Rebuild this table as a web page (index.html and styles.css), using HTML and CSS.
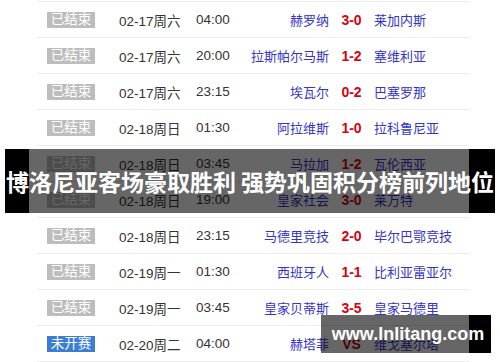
FILE: index.html
```html
<!DOCTYPE html>
<html lang="zh">
<head>
<meta charset="utf-8">
<link rel="stylesheet" href="styles.css">
</head>
<body>
<div class="page">
  <div class="list">
    <div class="row"><span class="badge done">已结束</span><span class="date">02-17周六</span><span class="time">04:00</span><span class="home">赫罗纳</span><span class="score">3-0</span><span class="away">莱加内斯</span></div>
    <div class="row"><span class="badge done">已结束</span><span class="date">02-17周六</span><span class="time">20:00</span><span class="home">拉斯帕尔马斯</span><span class="score">1-2</span><span class="away">塞维利亚</span></div>
    <div class="row"><span class="badge done">已结束</span><span class="date">02-17周六</span><span class="time">23:15</span><span class="home">埃瓦尔</span><span class="score">0-2</span><span class="away">巴塞罗那</span></div>
    <div class="row"><span class="badge done">已结束</span><span class="date">02-18周日</span><span class="time">01:30</span><span class="home">阿拉维斯</span><span class="score">1-0</span><span class="away">拉科鲁尼亚</span></div>
    <div class="row"><span class="badge done">已结束</span><span class="date">02-18周日</span><span class="time">03:45</span><span class="home">马拉加</span><span class="score">1-2</span><span class="away">瓦伦西亚</span></div>
    <div class="row"><span class="badge done">已结束</span><span class="date">02-18周日</span><span class="time">19:00</span><span class="home">皇家社会</span><span class="score">3-0</span><span class="away">莱万特</span></div>
    <div class="row"><span class="badge done">已结束</span><span class="date">02-18周日</span><span class="time">23:15</span><span class="home">马德里竞技</span><span class="score">2-0</span><span class="away">毕尔巴鄂竞技</span></div>
    <div class="row"><span class="badge done">已结束</span><span class="date">02-19周一</span><span class="time">01:30</span><span class="home">西班牙人</span><span class="score">1-1</span><span class="away">比利亚雷亚尔</span></div>
    <div class="row"><span class="badge done">已结束</span><span class="date">02-19周一</span><span class="time">03:45</span><span class="home">皇家贝蒂斯</span><span class="score">3-5</span><span class="away">皇家马德里</span></div>
    <div class="row"><span class="badge upcoming">未开赛</span><span class="date">02-20周二</span><span class="time">04:00</span><span class="home">赫塔菲</span><span class="score vs">VS</span><span class="away">维戈塞尔塔</span></div>
  </div>
  <div class="banner"><span>博洛尼亚客场豪取胜利 强势巩固积分榜前列地位</span></div>
  <div class="watermark"><span>www.lnlitang.com</span></div>
</div>
</body>
</html>
```
FILE: styles.css
```css
html, body {
  margin: 0;
  padding: 0;
  background: #fff;
}
.page {
  position: relative;
  width: 500px;
  height: 362px;
  overflow: hidden;
  font-family: "Liberation Sans", "Noto Sans CJK SC", sans-serif;
  font-size: 13px;
}
.list {
  margin: 1px 0 0 37px;
  width: 432px;
  border-top: 1px solid #ececec;
}
.row {
  display: grid;
  grid-template-columns: 72px 77px 54px 79px 45px 1fr;
  align-items: center;
  height: 35px;
  padding-left: 10px;
  border-bottom: 1px solid #ececec;
  white-space: nowrap;
}
.badge {
  width: 48px;
  height: 16px;
  line-height: 16px;
  text-align: center;
  color: #fff;
  font-size: 13.5px;
}
.done { background: #bdbdbd; }
.upcoming { background: #3b7dd2; }
.date, .time { color: #333; }
.date { font-size: 13.5px; }
.time { font-size: 13.5px; }
.home, .away { color: #3535c8; }
.home { text-align: right; }
.score {
  text-align: center;
  color: #d9000f;
  font-weight: bold;
  font-size: 14px;
}
.vs { color: #c00000; }
.banner {
  position: absolute;
  left: 5px;
  top: 149px;
  width: 490px;
  height: 64px;
  background: linear-gradient(to right, #000 0, #000 24px, rgba(0,0,0,0.6) 24px, rgba(0,0,0,0.6) 464px, #000 464px);
  display: flex;
  align-items: center;
  justify-content: center;
  color: #fff;
  font-family: "Noto Sans CJK SC", sans-serif;
  font-weight: bold;
  font-size: 23px;
  white-space: nowrap;
}
.watermark {
  position: absolute;
  left: 321px;
  top: 315px;
  width: 170px;
  height: 38px;
  background: linear-gradient(to right, rgba(0,0,0,0.6) 0, rgba(0,0,0,0.6) 148px, #000 148px);
  display: flex;
  align-items: center;
  justify-content: center;
  color: #fff;
  font-family: "Liberation Sans", sans-serif;
  font-weight: bold;
  font-size: 18px;
  white-space: nowrap;
}
.watermark span { margin-left: 4px; }
```
